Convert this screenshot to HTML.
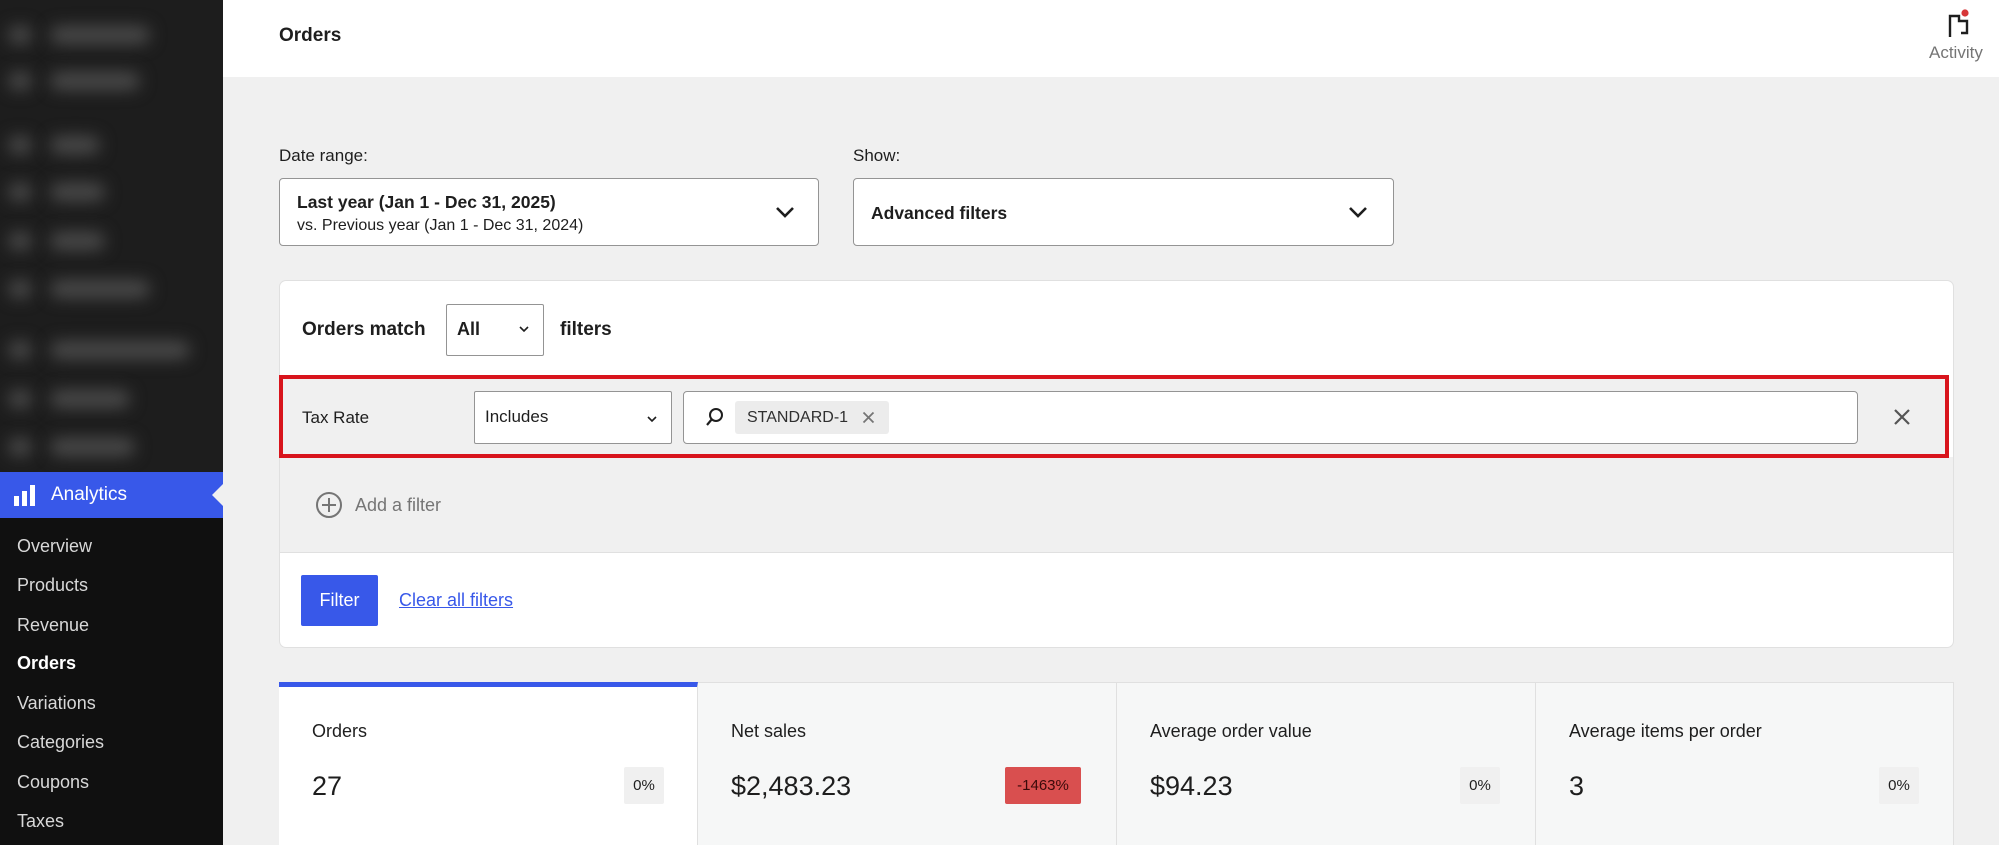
<!DOCTYPE html>
<html><head><meta charset="utf-8"><style>
*{box-sizing:border-box;margin:0;padding:0}
body{width:1999px;height:845px;overflow:hidden;background:#f0f0f0;font-family:"Liberation Sans",sans-serif;color:#1e1e1e;position:relative}
.abs{position:absolute}
#side{left:0;top:0;width:223px;height:845px;background:#101010}
#sidetop{left:0;top:0;width:223px;height:472px;background:#1d1d1d;overflow:hidden}
.blob{position:absolute;height:18px;background:#4a4a4a;border-radius:9px;filter:blur(8px)}
.menu{position:absolute;left:17px;font-size:18px;color:#d8d8d8}
#hdr{left:223px;top:0;width:1776px;height:77px;background:#fff}
.sel{position:absolute;background:#fff;border:1px solid #949494;border-radius:4px}
.chev{position:absolute}
.lbl{position:absolute;font-size:17px;color:#1e1e1e}
.card{position:absolute;top:682px;height:163px;width:419px;background:#f6f7f7;border-right:1px solid #e0e0e0;border-top:1px solid #e0e0e0}
.card .t{position:absolute;left:33px;top:38px;font-size:18px}
.card .v{position:absolute;left:33px;top:88px;font-size:27px}
.card .b{position:absolute;top:84px;height:37px;background:#f0f0f0;font-size:15px;line-height:37px;text-align:center;border-radius:2px;color:#1e1e1e}
</style></head><body>
<div id="side" class="abs"></div>
<div id="sidetop" class="abs">
 <div class="blob" style="left:8px;top:26px;width:24px"></div><div class="blob" style="left:50px;top:26px;width:100px"></div>
 <div class="blob" style="left:8px;top:72px;width:24px"></div><div class="blob" style="left:50px;top:72px;width:90px"></div>
 <div class="blob" style="left:8px;top:136px;width:24px"></div><div class="blob" style="left:50px;top:136px;width:50px"></div>
 <div class="blob" style="left:8px;top:183px;width:24px"></div><div class="blob" style="left:50px;top:183px;width:55px"></div>
 <div class="blob" style="left:8px;top:232px;width:24px"></div><div class="blob" style="left:50px;top:232px;width:55px"></div>
 <div class="blob" style="left:8px;top:280px;width:24px"></div><div class="blob" style="left:50px;top:280px;width:100px"></div>
 <div class="blob" style="left:8px;top:341px;width:24px"></div><div class="blob" style="left:50px;top:341px;width:140px"></div>
 <div class="blob" style="left:8px;top:390px;width:24px"></div><div class="blob" style="left:50px;top:390px;width:80px"></div>
 <div class="blob" style="left:8px;top:438px;width:24px"></div><div class="blob" style="left:50px;top:438px;width:85px"></div>
</div>
<div class="abs" style="left:0;top:472px;width:223px;height:46px;background:#3858e9"></div>
<svg class="abs" style="left:12px;top:482px" width="26" height="26" viewBox="0 0 26 26"><rect x="2" y="14" width="5" height="10" fill="#fff"/><rect x="10" y="9" width="5" height="15" fill="#fff"/><rect x="18" y="3" width="5" height="21" fill="#fff"/></svg>
<div class="abs" style="left:51px;top:484px;font-size:19px;color:#fff">Analytics</div>
<div class="abs" style="left:212px;top:484px;width:0;height:0;border-top:11px solid transparent;border-bottom:11px solid transparent;border-right:11px solid #f0f0f0"></div>
<div class="menu" style="top:536px">Overview</div>
<div class="menu" style="top:575px">Products</div>
<div class="menu" style="top:615px">Revenue</div>
<div class="menu" style="top:653px;color:#fff;font-weight:bold">Orders</div>
<div class="menu" style="top:693px">Variations</div>
<div class="menu" style="top:732px">Categories</div>
<div class="menu" style="top:772px">Coupons</div>
<div class="menu" style="top:811px">Taxes</div>

<div id="hdr" class="abs"></div>
<div class="abs" style="left:279px;top:25px;font-size:19px;font-weight:bold">Orders</div>
<svg class="abs" style="left:1944px;top:6px" width="30" height="34" viewBox="0 0 30 34"><path d="M6 31V10h9v5h8v12h-6" fill="none" stroke="#1e1e1e" stroke-width="2.4"/><circle cx="21" cy="7" r="3.6" fill="#d63638"/></svg>
<div class="abs" style="left:1929px;top:43px;font-size:17px;color:#757575">Activity</div>

<div class="lbl" style="left:279px;top:146px">Date range:</div>
<div class="sel" style="left:279px;top:178px;width:540px;height:68px"></div>
<div class="abs" style="left:297px;top:192px;font-size:17.5px;font-weight:bold">Last year (Jan 1 - Dec 31, 2025)</div>
<div class="abs" style="left:297px;top:217px;font-size:16px">vs. Previous year (Jan 1 - Dec 31, 2024)</div>
<svg class="chev" style="left:774px;top:204px" width="22" height="16" viewBox="0 0 22 16"><path d="M3 4l8 8 8-8" fill="none" stroke="#1e1e1e" stroke-width="2.6"/></svg>
<div class="lbl" style="left:853px;top:146px">Show:</div>
<div class="sel" style="left:853px;top:178px;width:541px;height:68px"></div>
<div class="abs" style="left:871px;top:203px;font-size:17.5px;font-weight:bold">Advanced filters</div>
<svg class="chev" style="left:1347px;top:204px" width="22" height="16" viewBox="0 0 22 16"><path d="M3 4l8 8 8-8" fill="none" stroke="#1e1e1e" stroke-width="2.6"/></svg>

<div class="abs" style="left:279px;top:280px;width:1675px;height:368px;background:#fff;border:1px solid #e0e0e0;border-radius:7px;overflow:hidden">
 <div class="abs" style="left:0;top:176px;width:1675px;height:96px;background:#f0f0f0;border-bottom:1px solid #e0e0e0"></div>
</div>
<div class="abs" style="left:302px;top:319px;font-size:19px;font-weight:bold">Orders match</div>
<div class="sel" style="left:446px;top:304px;width:98px;height:52px;border-radius:2px"></div>
<div class="abs" style="left:457px;top:319px;font-size:18px;font-weight:bold">All</div>
<svg class="chev" style="left:517px;top:324px" width="14" height="10" viewBox="0 0 14 10"><path d="M3 3l4 4 4-4" fill="none" stroke="#1e1e1e" stroke-width="1.6"/></svg>
<div class="abs" style="left:560px;top:319px;font-size:19px;font-weight:bold">filters</div>

<div class="abs" style="left:279px;top:375px;width:1670px;height:83px;background:#f0f0f0;border:4px solid #d8141c"></div>
<div class="abs" style="left:302px;top:408px;font-size:17px">Tax Rate</div>
<div class="sel" style="left:474px;top:391px;width:198px;height:53px;border-radius:2px"></div>
<div class="abs" style="left:485px;top:407px;font-size:17px">Includes</div>
<svg class="chev" style="left:645px;top:414px" width="14" height="10" viewBox="0 0 14 10"><path d="M3 3l4 4 4-4" fill="none" stroke="#1e1e1e" stroke-width="1.6"/></svg>
<div class="sel" style="left:683px;top:391px;width:1175px;height:53px"></div>
<svg class="abs" style="left:704px;top:406px" width="22" height="22" viewBox="0 0 22 22"><circle cx="12" cy="9" r="6" fill="none" stroke="#1e1e1e" stroke-width="2"/><path d="M8 13l-5 6" stroke="#1e1e1e" stroke-width="2.2"/></svg>
<div class="abs" style="left:735px;top:401px;width:154px;height:33px;background:#ececec;border-radius:3px"></div>
<div class="abs" style="left:747px;top:409px;font-size:16px;color:#2f2f2f">STANDARD-1</div>
<svg class="abs" style="left:862px;top:411px" width="13" height="13" viewBox="0 0 13 13"><path d="M1.5 1.5l10 10M11.5 1.5l-10 10" stroke="#757575" stroke-width="1.8"/></svg>
<svg class="abs" style="left:1893px;top:408px" width="18" height="18" viewBox="0 0 18 18"><path d="M2 2l14 14M16 2L2 16" stroke="#555" stroke-width="2.2"/></svg>

<svg class="abs" style="left:315px;top:491px" width="28" height="28" viewBox="0 0 28 28"><circle cx="14" cy="14" r="12" fill="none" stroke="#757575" stroke-width="2"/><path d="M14 7v14M7 14h14" stroke="#757575" stroke-width="2"/></svg>
<div class="abs" style="left:355px;top:495px;font-size:18px;color:#757575">Add a filter</div>

<div class="abs" style="left:301px;top:575px;width:77px;height:51px;background:#3858e9;border-radius:2px;color:#fff;font-size:18px;line-height:51px;text-align:center">Filter</div>
<div class="abs" style="left:399px;top:590px;font-size:18px;color:#3858e9;text-decoration:underline">Clear all filters</div>

<div class="card" style="left:279px;width:419px;background:#fff;border-top:5px solid #3858e9"><div class="t" style="top:34px">Orders</div><div class="v" style="top:84px">27</div><div class="b" style="left:345px;width:40px;top:80px">0%</div></div>
<div class="card" style="left:698px"><div class="t">Net sales</div><div class="v">$2,483.23</div><div class="b" style="left:307px;width:76px;background:#d94f4f;color:#3a0a0a">-1463%</div></div>
<div class="card" style="left:1117px"><div class="t">Average order value</div><div class="v">$94.23</div><div class="b" style="left:343px;width:40px">0%</div></div>
<div class="card" style="left:1536px;width:418px"><div class="t">Average items per order</div><div class="v">3</div><div class="b" style="left:343px;width:40px">0%</div></div>
</body></html>
